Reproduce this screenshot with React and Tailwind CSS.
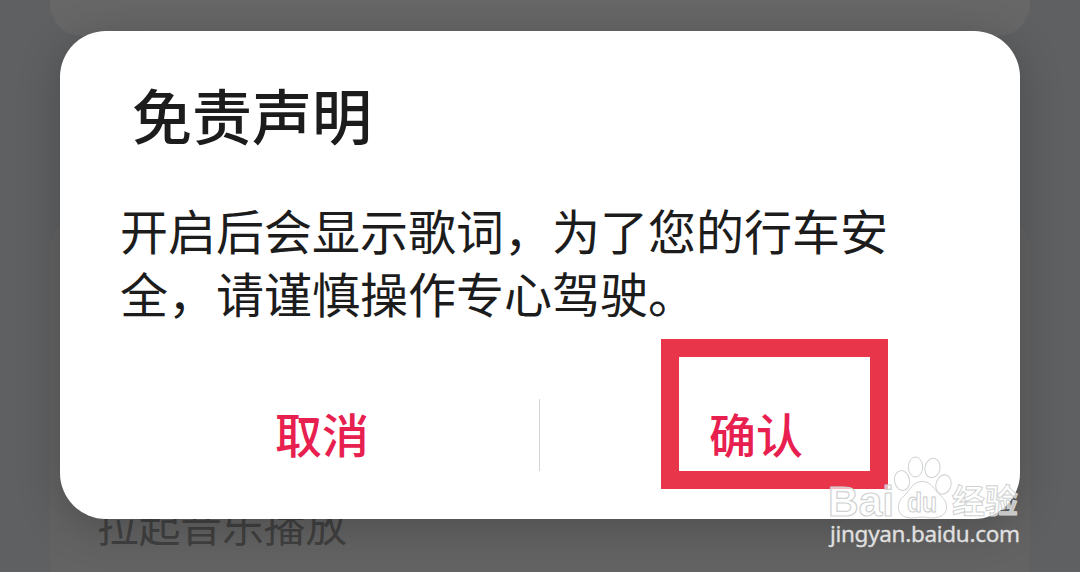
function Watermark() {
  return (
    <svg className="absolute left-[820px] top-[448px]" width="220" height="104" viewBox="0 0 220 104">
      <g fill="#fff" fillOpacity="0.68" stroke="#cfd2d2" strokeWidth="1">
        <text x="8" y="67.500" fontSize="43" fontWeight="700" fontFamily="'Liberation Sans', sans-serif" textLength="66" lengthAdjust="spacingAndGlyphs" strokeWidth="1.2">Bai</text>
        <ellipse cx="82" cy="32.500" rx="7.500" ry="10" transform="rotate(-12 82 32.500)" />
        <ellipse cx="95.500" cy="19" rx="7.200" ry="10" />
        <ellipse cx="112.500" cy="20" rx="7.500" ry="9.800" transform="rotate(12 112.500 20)" />
        <ellipse cx="123.500" cy="36.500" rx="7.500" ry="9.800" transform="rotate(18 123.500 36.500)" />
        <path d="M102 33.500C92 33.500 90 43 84 48C76 54 76 67 87 69.500C92 71 97 69 102 69C108 69 112 71 117 69.500C129 67 129 55 121 48C114 42 112 33.500 102 33.500Z" />
        <text x="87" y="64" fontSize="27" fontWeight="700" fontFamily="'Liberation Sans', sans-serif" textLength="30" lengthAdjust="spacingAndGlyphs" stroke="#c9cccc">du</text>
        <text x="132" y="64.500" fontSize="33" fontWeight="700" fontFamily="'Noto Sans CJK SC', sans-serif" textLength="66">经验</text>
      </g>
      <text x="10" y="94" fontSize="22.500" fill="#e0e0e0" stroke="#e0e0e0" strokeWidth="0.3" fontFamily="'Noto Sans', sans-serif" textLength="190">jingyan.baidu.com</text>
    </svg>
  );
}

export default function App() {
  return (
    <main className="relative flex h-[572px] w-[1080px] flex-col overflow-hidden bg-[#5f6062] font-['Noto_Sans_CJK_SC',sans-serif]">
      <div className="mx-[50px] h-9 shrink-0 rounded-b-[32px] bg-[#676767]" />
      <div className="mx-[50px] mt-[180px] flex h-[400px] shrink-0 items-end rounded-t-[32px] bg-[#636363] pb-[67px] pl-[47px]">
        <span className="text-[41.700px] leading-[50px] text-[#404040]">拉起音乐播放</span>
      </div>
      <section
        role="dialog"
        className="absolute left-[60px] top-[31px] flex h-[487.500px] w-[960px] flex-col rounded-[46px] bg-white shadow-[0_8px_44px_rgba(0,0,0,0.22)]"
      >
        <h1 className="mt-[48px] pl-[72px] text-[60px] font-medium leading-[70px] text-[#1c1c1c]">免责声明</h1>
        <p className="ml-[60px] mt-[49px] w-[800px] text-[48px] leading-[63px] text-[#1c1c1c]">
          开启后会显示歌词，为了您的行车安<br />全，请谨慎操作专心驾驶。
        </p>
        <div className="mt-[75px] flex h-[72px] items-center">
          <button className="h-full w-[479px] pb-1 pl-[45px] text-[47px] font-medium leading-[68px] text-[#e8204f]">取消</button>
          <span className="h-full w-px bg-[#d4d4d4]" />
          <button className="h-full w-[480px] pb-1 pr-[48px] text-[47px] font-medium leading-[68px] text-[#e8204f]">确认</button>
        </div>
      </section>
      <div className="absolute left-[661px] top-[338.500px] h-[150px] w-[227px] border-[18px] border-[#e93549]" />
      <Watermark />
    </main>
  );
}
